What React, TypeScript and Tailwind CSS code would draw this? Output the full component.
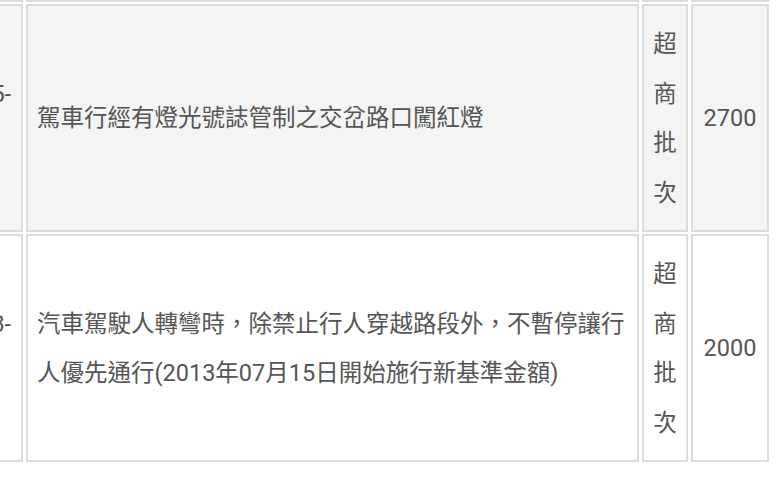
const rows = [
  {
    code: ["005-", "01"],
    desc: "駕車行經有燈光號誌管制之交岔路口闖紅燈",
    channel: "超商批次",
    amount: "2700",
    shade: true,
  },
  {
    code: ["003-", "01"],
    desc: "汽車駕駛人轉彎時，除禁止行人穿越路段外，不暫停讓行人優先通行(2013年07月15日開始施行新基準金額)",
    channel: "超商批次",
    amount: "2000",
    shade: false,
  },
];

const cell = "border-2 border-[#dcdcdc] px-[9px] pt-[14px] pb-[12px] align-middle";

export default function App() {
  return (
    <div
      className="w-[781px] h-[482px] overflow-hidden bg-white text-[23.5px] leading-[49.5px] text-[#555]"
      style={{ fontFamily: 'Roboto, "Noto Sans CJK TC", sans-serif' }}
    >
      <table className="table-fixed w-[821px] ml-[-49px] mt-[-50px] border-separate border-spacing-x-[3px] border-spacing-y-[2px]">
        <colgroup>
          <col className="w-[69px]" />
          <col className="w-[613px]" />
          <col className="w-[46px]" />
          <col className="w-[78px]" />
        </colgroup>
        <tbody>
          <tr>
            <td className="border-2 border-[#dcdcdc] p-0">
              <div className="h-[46px]" />
            </td>
            <td className="border-2 border-[#dcdcdc] p-0" />
            <td className="border-2 border-[#dcdcdc] p-0" />
            <td className="border-2 border-[#dcdcdc] p-0" />
          </tr>
          {rows.map((r) => (
            <tr key={r.amount} className={r.shade ? "bg-[#f4f4f4]" : "bg-white"}>
              <td className={`${cell} text-left`}>
                {r.code.map((c) => (
                  <div key={c}>{c}</div>
                ))}
              </td>
              <td className={`${cell} text-left`}>{r.desc}</td>
              <td className={`${cell} text-center`}>
                {r.channel.split("").map((ch) => (
                  <div key={ch}>{ch}</div>
                ))}
              </td>
              <td className={`${cell} text-center`}>{r.amount}</td>
            </tr>
          ))}
        </tbody>
      </table>
    </div>
  );
}
